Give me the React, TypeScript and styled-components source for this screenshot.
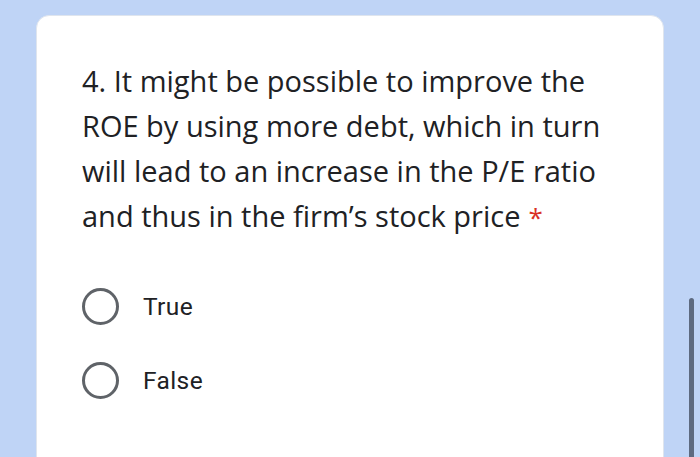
import React from 'react'
import styled, { createGlobalStyle } from 'styled-components'

const GlobalStyle = createGlobalStyle`
  html, body {
    margin: 0;
    padding: 0;
    background: #bfd4f6;
    overflow: hidden;
  }
`

const Page = styled.div`
  width: 700px;
  height: 457px;
  box-sizing: border-box;
  padding: 15px 0 0 36px;
  display: flex;
  gap: 25px;
  overflow: hidden;
`

const Card = styled.div`
  width: 628px;
  height: 480px;
  flex-shrink: 0;
  box-sizing: border-box;
  background: #ffffff;
  border-radius: 13px;
  border: 1px solid #dfe5ee;
  padding: 42px 20px 0 45px;
`

const Question = styled.div`
  font-family: 'Open Sans', 'Noto Sans', sans-serif;
  font-size: 29px;
  line-height: 45px;
  color: #202124;
  letter-spacing: 0;
`

const Line = styled.span`
  display: block;
  white-space: nowrap;
`

const Required = styled.span`
  color: #d93025;
  margin-left: 8px;
  font-size: 26px;
`

const Options = styled.div`
  margin-top: 48px;
  display: flex;
  flex-direction: column;
  gap: 37px;
`

const Option = styled.label`
  display: flex;
  align-items: center;
  gap: 24px;
  font-family: Roboto, 'Liberation Sans', sans-serif;
  font-size: 24.5px;
  letter-spacing: 0.4px;
  color: #202124;
`

const Radio = styled.span`
  width: 37px;
  height: 37px;
  box-sizing: border-box;
  border: 3.5px solid #5f6368;
  border-radius: 50%;
  flex-shrink: 0;
`

const Scrollbar = styled.div`
  margin-top: 283px;
  width: 5px;
  height: 170px;
  flex-shrink: 0;
  border-radius: 3px;
  background: #5d6a80;
`

export default function App() {
  return (
    <>
      <GlobalStyle />
      <Page>
        <Card>
          <Question>
            <Line>4. It might be possible to improve the</Line>
            <Line>ROE by using more debt, which in turn</Line>
            <Line>will lead to an increase in the P/E ratio</Line>
            <Line>
              and thus in the firm’s stock price
              <Required>*</Required>
            </Line>
          </Question>
          <Options>
            <Option>
              <Radio />
              True
            </Option>
            <Option>
              <Radio />
              False
            </Option>
          </Options>
        </Card>
        <Scrollbar />
      </Page>
    </>
  )
}
